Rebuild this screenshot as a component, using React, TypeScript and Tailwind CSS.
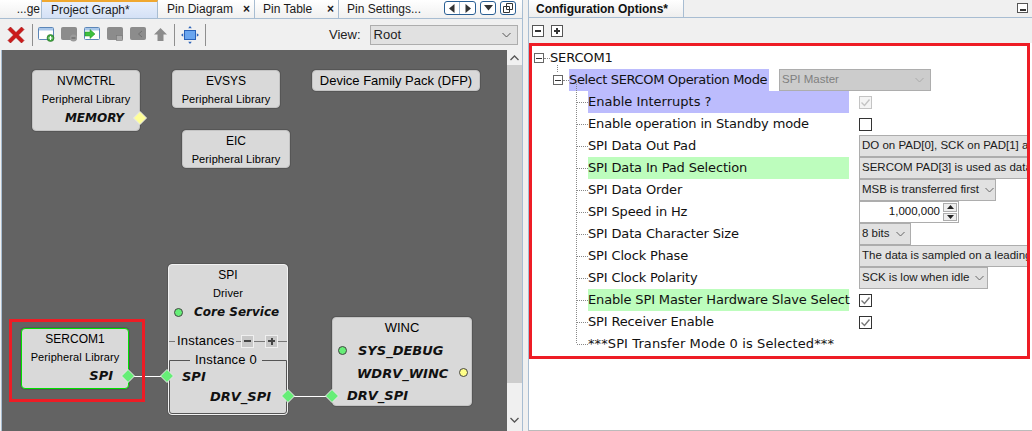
import React from "react";

const dv = "font-['DejaVu_Sans',sans-serif]";
const ui = "font-['Liberation_Sans',sans-serif]";

function Diamond({ color, className }: { color: string; className: string }) {
  return (
    <svg width="14" height="14" viewBox="0 0 14 14" className={"absolute " + className}>
      <polygon points="7,0.5 13.5,7 7,13.5 0.5,7" fill={color} stroke="#e8e8e8" strokeWidth="1" />
    </svg>
  );
}

function Dot({ color, className }: { color: string; className: string }) {
  return <span className={"absolute h-[9px] w-[9px] rounded-full border border-[#444] " + className} style={{ backgroundColor: color }} />;
}

function Node({ className, title, sub, children, green, titleClass }: { className: string; title: string; sub?: string; children?: React.ReactNode; green?: boolean; titleClass?: string }) {
  return (
    <div className={"absolute rounded-[4px] border bg-[#d9d9d9] shadow-[0_0_0_1px_rgba(70,70,70,0.45)] text-black " + (green ? "border-[#00e000] " : "border-[#c4c4c4] ") + className}>
      <div className={ui + " text-center leading-[20px] " + (titleClass || "text-[12px]")}>{title}</div>
      {sub && <div className={ui + " text-center text-[11px] leading-[16px] tracking-[0.1px]"}>{sub}</div>}
      {children}
    </div>
  );
}

function Port({ className, children, small }: { className: string; children: React.ReactNode; small?: boolean }) {
  return <span className={dv + " absolute whitespace-nowrap leading-[18px] font-bold italic text-[#111] " + (small ? "text-[12px] " : "text-[13px] ") + className}>{children}</span>;
}

function Win({ tone, badge }: { tone: "on" | "off"; badge?: React.ReactNode }) {
  return (
    <svg width="17" height="15" viewBox="0 0 17 15">
      <rect x="0.5" y="0.5" width="15" height="12" rx="1" fill={tone === "on" ? "#fff" : "#8c8c8c"} stroke={tone === "on" ? "#5b86b8" : "#8c8c8c"} />
      {tone === "on" && <rect x="1" y="1" width="14" height="2.5" fill="#a9c7ea" />}
      {badge}
    </svg>
  );
}

function Toolbar() {
  return (
    <div className="flex h-[32px] items-center border-t border-[#a8bdd2] bg-[#f0f0f0] pl-[6px]">
      <svg width="20" height="20" viewBox="0 0 20 20" className="mr-[6px]">
        <path d="M2 4.5 4.5 2 10 7.5 15.5 2 18 4.5 12.5 10 18 15.5 15.5 18 10 12.5 4.5 18 2 15.5 7.5 10Z" fill="#cc1a1a" stroke="#a01010" strokeWidth="0.6" />
      </svg>
      <span className="h-[22px] w-px bg-[#8f8f8f]" />
      <div className="ml-[5px] flex w-[136px] items-center gap-[6px]">
        <Win tone="on" badge={<g><circle cx="12.5" cy="11" r="3.5" fill="#3fa83f" stroke="#2a6f2a" strokeWidth="0.6" /><path d="M10.5 11h4M12.5 9v4" stroke="#fff" strokeWidth="1.2" /></g>} />
        <Win tone="off" badge={<g><circle cx="12.5" cy="11" r="3.5" fill="#9a9a9a" /><path d="M10.5 11h4" stroke="#666" strokeWidth="1.2" /></g>} />
        <Win tone="on" badge={<path d="M1 5h5V2.5L11 7 6 11.5V9H1Z" fill="#3fc03f" stroke="#1f8f1f" strokeWidth="0.5" />} />
        <Win tone="off" badge={<g><rect x="9.5" y="8.5" width="6" height="5" fill="#a8a8a8" stroke="#777" strokeWidth="0.6" /></g>} />
        <Win tone="off" badge={<path d="M12 4 8.5 7 12 10" fill="none" stroke="#6f6f6f" strokeWidth="1" />} />
        <svg width="15" height="15" viewBox="0 0 15 15">
          <path d="M7.5 1 14 7.5H10.5V14H4.5V7.5H1Z" fill="#8c8c8c" />
        </svg>
      </div>
      <span className="h-[22px] w-px bg-[#8f8f8f]" />
      <svg width="18" height="18" viewBox="0 0 18 18" className="mx-[6px]">
        <rect x="3.5" y="4.5" width="11" height="9" fill="#6aa6f0" stroke="#2a62b8" />
        <path d="M9 0 10.8 2.2H7.2ZM9 18 7.2 15.8H10.8ZM0 9 2.2 7.2V10.8ZM18 9 15.8 10.8V7.2Z" fill="#2a62b8" />
      </svg>
      <span className="h-[22px] w-px bg-[#8f8f8f]" />
      <span className={ui + " ml-[123px] text-[13px] text-[#222]"}>View:</span>
      <div className={ui + " ml-[9px] flex h-[20px] w-[148px] items-center justify-between border border-[#adadad] bg-[#e1e1e1] pl-[3px] pr-[6px] text-[13px] text-[#222]"}>
        Root
        <svg width="9" height="6" viewBox="0 0 9 6"><path d="M0.5 1 4.5 5 8.5 1" fill="none" stroke="#555" /></svg>
      </div>
    </div>
  );
}

function Tabs() {
  return (
    <div className={ui + " flex h-[18px] items-stretch bg-gradient-to-b from-[#ffffff] to-[#f0f0f0] text-[12px] text-[#1a1a1a]"}>
      <div className="flex w-[42px] items-center justify-end border-r border-[#a8bdd2] pr-[1px]">...ge</div>
      <div className="flex w-[116px] items-center border-r border-[#a8bdd2] border-t-2 border-t-[#f0a830] bg-gradient-to-b from-[#e8effb] to-[#d4e1f6] pl-[9px]">Project Graph*</div>
      <div className="flex w-[97px] items-center justify-between border-r border-[#a8bdd2] pl-[9px] pr-[4px]">Pin Diagram<span className="text-[12px] font-bold">×</span></div>
      <div className="flex w-[84px] items-center justify-between border-r border-[#a8bdd2] pl-[8px] pr-[4px]">Pin Table<span className="text-[12px] font-bold">×</span></div>
      <div className="flex w-[105px] items-center pl-[8px]">Pin Settings...</div>
      <div className="flex items-start gap-[4px] pt-[1px]">
        <div className="flex h-[14px] w-[32px] overflow-hidden rounded-[3px] border border-[#2a5f94] bg-white">
          <span className="flex w-1/2 items-center justify-center border-r border-[#9db8d2]"><svg width="6" height="9" viewBox="0 0 6 9"><path d="M5.5 0V9L0 4.5Z" fill="#333" /></svg></span>
          <span className="flex w-1/2 items-center justify-center"><svg width="6" height="9" viewBox="0 0 6 9"><path d="M0.5 0V9L6 4.5Z" fill="#333" /></svg></span>
        </div>
        <div className="flex h-[14px] w-[16px] items-center justify-center rounded-[3px] border border-[#2a5f94] bg-white"><svg width="9" height="6" viewBox="0 0 9 6"><path d="M0 0H9L4.5 5.5Z" fill="#333" /></svg></div>
        <div className="flex h-[14px] w-[16px] items-center justify-center rounded-[3px] border border-[#2a5f94] bg-white"><svg width="10" height="10" viewBox="0 0 10 10"><path d="M3.5 0.5h6v6h-6ZM0.5 3.5h6v6h-6Z" fill="#fff" stroke="#333" /></svg></div>
      </div>
    </div>
  );
}

function MiniBtn({ plus }: { plus?: boolean }) {
  return (
    <span className="relative flex h-[13px] w-[13px] shrink-0 items-center justify-center border border-[#f0f0f0] bg-[#c8c8c8]">
      <span className="h-[2px] w-[7px] bg-[#444]" />
      {plus && <span className="absolute h-[7px] w-[2px] bg-[#444]" />}
    </span>
  );
}

function Canvas() {
  return (
    <div className="relative flex-1 overflow-hidden bg-[#636363]">
      <Node className="left-[30px] top-[20px] h-[61px] w-[108px]" title="NVMCTRL" sub="Peripheral Library">
        <Port small className="right-[15px] top-[38px]">MEMORY</Port>
        <Diamond color="#ffff99" className="right-[-8px] top-[40px]" />
      </Node>
      <Node className="left-[170px] top-[20px] h-[38px] w-[108px]" title="EVSYS" sub="Peripheral Library" />
      <Node className="left-[180px] top-[80px] h-[38px] w-[108px]" title="EIC" sub="Peripheral Library" />
      <Node className="left-[310px] top-[20px] h-[21px] w-[168px]" title="Device Family Pack (DFP)" titleClass="text-[13px]" />

      <Node green className="left-[19px] top-[278px] h-[61px] w-[108px]" title="SERCOM1" sub="Peripheral Library">
        <Port className="right-[15px] top-[38px]">SPI</Port>
      </Node>

      <span className="absolute left-[127px] top-[326px] h-[1px] w-[40px] bg-white" />
      <span className="absolute left-[287px] top-[346px] h-[1px] w-[44px] bg-white" />

      <Node className="left-[166px] top-[214px] h-[151px] w-[120px] border-[#f2f2f2]" title="SPI" sub="Driver">
        <Dot color="#66ee77" className="left-[5px] top-[43px]" />
        <Port small className="left-[25px] top-[38px]">Core Service</Port>
        <div className="absolute left-0 right-0 top-[70px] flex h-[12px] items-center">
          <span className="h-px w-[6px] bg-[#777]" />
          <span className={ui + " px-[2px] text-[13px] leading-[12px] tracking-[0.2px]"}>Instances</span>
          <span className="h-px w-[5px] bg-[#777]" />
          <MiniBtn />
          <span className="h-px w-[11px] bg-[#777]" />
          <MiniBtn plus />
          <span className="h-px flex-1 bg-[#777]" />
        </div>
        <div className="absolute inset-x-0 bottom-0 top-[95px] rounded-b-[3px] border border-[#555]">
          <span className={ui + " absolute left-[20px] top-[-10px] bg-[#d9d9d9] px-[5px] text-[13px] leading-[18px] tracking-[0.2px]"}>Instance 0</span>
          <Port className="left-[12px] top-[7px]">SPI</Port>
          <Port className="right-[15px] top-[27px]">DRV_SPI</Port>
        </div>
      </Node>

      <Node className="left-[330px] top-[267px] h-[89px] w-[140px]" title="WINC" titleClass="text-[13px]">
        <Dot color="#66ee77" className="left-[5px] top-[28px]" />
        <Port className="left-[25px] top-[24px]">SYS_DEBUG</Port>
        <Port className="left-[24px] top-[47px]">WDRV_WINC</Port>
        <Dot color="#ffff88" className="right-[3px] top-[50px]" />
        <Port className="left-[14px] top-[69px]">DRV_SPI</Port>
      </Node>

      <Diamond color="#66ee77" className="left-[119px] top-[319px]" />
      <Diamond color="#66ee77" className="left-[158px] top-[319px]" />
      <Diamond color="#66ee77" className="left-[279px] top-[339px]" />
      <Diamond color="#66ee77" className="left-[323px] top-[339px]" />

      <div className="absolute left-[7px] top-[269px] h-[83px] w-[136px] border-[3px] border-[#ee1c25]" />
    </div>
  );
}

function Left() {
  return (
    <div className="flex w-[523px] shrink-0 flex-col border-r border-[#a8bdd2] bg-[#f0f0f0]">
      <Tabs />
      <Toolbar />
      <div className="ml-[1px] flex flex-1 border-l border-[#a8bdd2]">
        <Canvas />
        <div className="flex w-[15px] flex-col items-center bg-[#f0f0f0]">
          <div className="flex h-[15px] items-center"><svg width="9" height="6" viewBox="0 0 9 6"><path d="M0.5 5 4.5 1 8.5 5" fill="none" stroke="#555" strokeWidth="1.3" /></svg></div>
          <div className="h-[318px] w-full bg-[#cdcdcd]" />
          <div className="flex-1" />
          <div className="mb-[4px] flex h-[15px] items-center"><svg width="9" height="6" viewBox="0 0 9 6"><path d="M0.5 1 4.5 5 8.5 1" fill="none" stroke="#555" strokeWidth="1.3" /></svg></div>
        </div>
      </div>
    </div>
  );
}

function Box() {
  return (
    <span className="flex h-[10px] w-[10px] shrink-0 items-center justify-center border border-[#666] bg-white">
      <span className="block h-px w-[6px] bg-[#333]" />
    </span>
  );
}

function Check({ checked, disabled }: { checked?: boolean; disabled?: boolean }) {
  return (
    <svg width="13" height="13" viewBox="0 0 13 13">
      <rect x="0.5" y="0.5" width="12" height="12" fill={disabled ? "#f4f4f4" : "#fff"} stroke={disabled ? "#c4c4c4" : "#333"} />
      {checked && <path d="M2.5 6.5 5.5 9.5 10.5 3.5" fill="none" stroke={disabled ? "#c4c4c4" : "#777"} strokeWidth="1.4" />}
    </svg>
  );
}

function Combo({ text, w, clipped }: { text: string; w?: string; clipped?: boolean }) {
  return (
    <div className={ui + " flex h-[22px] items-center justify-between overflow-hidden whitespace-nowrap border border-[#adadad] bg-[#e1e1e1] pl-[2px] pr-[6px] text-[11.5px] tracking-normal text-[#1a1a1a] " + (clipped ? "w-[180px]" : w)}>
      {text}
      {!clipped && <svg width="9" height="6" viewBox="0 0 9 6" className="ml-[6px] shrink-0"><path d="M0.5 1 4.5 5 8.5 1" fill="none" stroke="#666" /></svg>}
    </div>
  );
}

function Row({ label, hl, children }: { label: string; hl?: string; children?: React.ReactNode }) {
  return (
    <div className="flex h-[22px] items-center pl-[45px]">
      <span className="w-[11px] shrink-0 border-t border-dotted border-[#888]" />
      <span className={"flex h-[22px] w-[261px] shrink-0 items-center whitespace-nowrap " + (hl || "")}>{label}</span>
      <span className="ml-[10px] flex items-center">{children}</span>
    </div>
  );
}

function Right() {
  return (
    <div className="ml-[5px] flex min-w-0 flex-1 flex-col border-b border-l border-b-[#bbb] border-l-[#a8bdd2] bg-white">
      <div className="flex h-[18px] items-stretch justify-between border-b border-[#a8bdd2] bg-[#f0f0f0]">
        <div className={ui + " flex w-[155px] items-center border-r border-[#a8bdd2] bg-gradient-to-b from-[#ffffff] to-[#eeeeee] pl-[7px] text-[12px] font-bold text-[#111]"}>Configuration Options*</div>
        <div className="mr-[4px] mt-[3px] flex h-[10px] w-[11px] items-end justify-center border border-[#555] bg-white pb-[1px]"><span className="h-[2px] w-[6px] bg-[#333]" /></div>
      </div>
      <div className="flex h-[25px] items-center gap-[7px] bg-[#f0f0f0] pl-[3px]">
        <span className="flex h-[12px] w-[12px] items-center justify-center border border-[#555] bg-white"><span className="h-[2px] w-[6px] bg-[#333]" /></span>
        <span className="relative flex h-[12px] w-[12px] items-center justify-center border border-[#555] bg-white"><span className="h-[2px] w-[6px] bg-[#333]" /><span className="absolute h-[6px] w-[2px] bg-[#333]" /></span>
      </div>
      <div className={dv + " relative mr-[2px] h-[316px] overflow-hidden border-[3px] border-[#ee1c25] pt-[1px] text-[13px] tracking-[-0.15px] text-[#111]"}>
        <span className="absolute left-[44px] top-[36px] h-[261px] border-l border-dotted border-[#888]" />
        <span className="absolute left-[25px] top-[19px] h-[7px] border-l border-dotted border-[#888]" />
        <div className="flex h-[22px] items-center pl-[2px]">
          <Box />
          <span className="w-[6px] border-t border-dotted border-[#888]" />
          <span>SERCOM1</span>
        </div>
        <div className="flex h-[22px] items-center pl-[21px]">
          <Box />
          <span className="w-[6px] border-t border-dotted border-[#888]" />
          <span className="flex h-[22px] w-[200px] items-center whitespace-nowrap bg-[#bcbcfd] tracking-[-0.35px]">Select SERCOM Operation Mode</span>
          <div className={ui + " ml-[10px] flex h-[22px] w-[152px] items-center justify-between border border-[#adadad] bg-[#cccccc] pl-[2px] pr-[6px] text-[11.5px] tracking-normal text-[#808080]"}>
            SPI Master
            <svg width="9" height="6" viewBox="0 0 9 6"><path d="M0.5 1 4.5 5 8.5 1" fill="none" stroke="#aaa" /></svg>
          </div>
        </div>
        <div className="tracking-normal">
          <Row label="Enable Interrupts ?" hl="bg-[#bcbcfd]"><Check checked disabled /></Row>
        </div>
        <Row label="Enable operation in Standby mode"><Check /></Row>
        <Row label="SPI Data Out Pad"><Combo clipped text="DO on PAD[0], SCK on PAD[1] and" /></Row>
        <Row label="SPI Data In Pad Selection" hl="bg-[#bdfdbd]"><Combo clipped text="SERCOM PAD[3] is used as data in" /></Row>
        <Row label="SPI Data Order"><Combo w="w-[137px]" text="MSB is transferred first" /></Row>
        <Row label="SPI Speed in Hz">
          <div className={ui + " flex h-[22px] w-[100px] items-center justify-end border border-[#adadad] bg-white pr-[1px] text-[11.5px] tracking-normal"}>
            1,000,000
            <span className="ml-[3px] flex h-[18px] w-[14px] flex-col gap-px">
              <span className="flex flex-1 items-center justify-center border border-[#adadad] bg-[#eee]"><svg width="7" height="4" viewBox="0 0 7 4"><path d="M3.5 0 7 4H0Z" fill="#222" /></svg></span>
              <span className="flex flex-1 items-center justify-center border border-[#adadad] bg-[#eee]"><svg width="7" height="4" viewBox="0 0 7 4"><path d="M0 0H7L3.5 4Z" fill="#222" /></svg></span>
            </span>
          </div>
        </Row>
        <Row label="SPI Data Character Size"><Combo w="w-[52px]" text="8 bits" /></Row>
        <Row label="SPI Clock Phase"><Combo clipped text="The data is sampled on a leading" /></Row>
        <Row label="SPI Clock Polarity"><Combo w="w-[129px]" text="SCK is low when idle" /></Row>
        <Row label="Enable SPI Master Hardware Slave Select" hl="bg-[#bdfdbd]"><Check checked /></Row>
        <Row label="SPI Receiver Enable"><Check checked /></Row>
        <div className="tracking-[0.1px]">
          <Row label="***SPI Transfer Mode 0 is Selected***" />
        </div>
      </div>
    </div>
  );
}

export default function App() {
  return (
    <div className="flex h-[431px] w-[1032px] overflow-hidden bg-[#f0f0f0]">
      <Left />
      <Right />
    </div>
  );
}
